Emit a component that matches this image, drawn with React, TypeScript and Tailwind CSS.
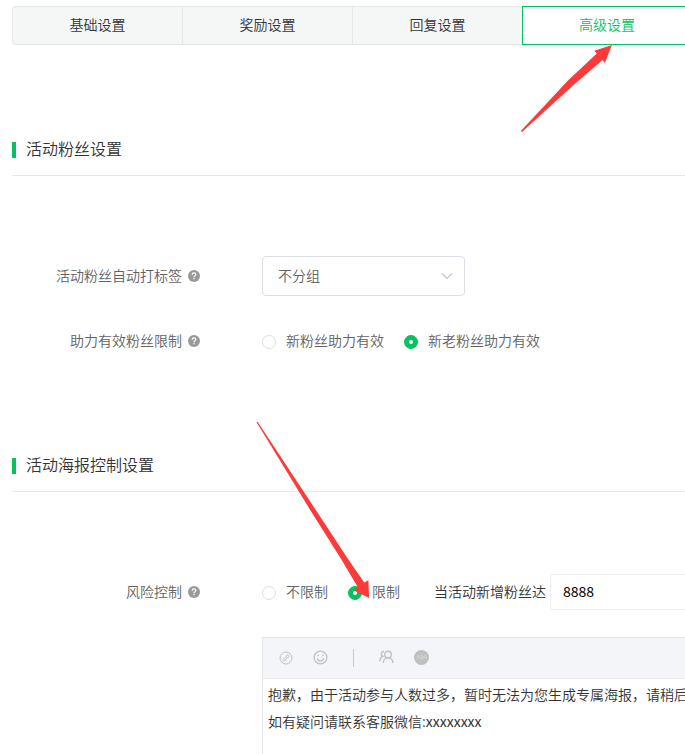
import type { ReactNode } from "react";

const TABS = ["基础设置", "奖励设置", "回复设置"];

function Help() {
  return (
    <svg className="mb-px ml-1.5 block h-3 w-3 shrink-0" viewBox="0 0 12 12">
      <circle cx="6" cy="6" r="6" fill="#999" />
      <path d="M4.2 4.7C4.2 2.4 7.8 2.4 7.8 4.5C7.8 5.7 6 5.7 6 7.2" fill="none" stroke="#fff" strokeWidth="1.2" />
      <rect x="5.4" y="8" width="1.2" height="1.3" fill="#fff" />
    </svg>
  );
}

function Label({ children }: { children: ReactNode }) {
  return (
    <div className="flex w-[188px] shrink-0 items-center justify-end text-[#606266]">
      <span className="pb-0.5">{children}</span>
      <Help />
    </div>
  );
}

function Radio({ checked, children, className = "" }: { checked?: boolean; children: ReactNode; className?: string }) {
  return (
    <div className={`flex shrink-0 items-center whitespace-nowrap text-[#606266] ${className}`}>
      <span
        className={`mt-0.5 mr-2.5 flex h-3.5 w-3.5 items-center justify-center rounded-full border ${
          checked ? "border-[#07c160] bg-[#07c160]" : "border-[#dcdfe6] bg-white"
        }`}
      >
        {checked && <span className="h-1 w-1 rounded-full bg-white" />}
      </span>
      <span className="pb-0.5">{children}</span>
    </div>
  );
}

function SectionTitle({ children }: { children: ReactNode }) {
  return (
    <div className="flex h-[52px] items-center border-b border-[#e7e7e7] text-base text-[#333]">
      <span className="mr-2.5 h-4 w-1 bg-[#07c160]" />
      <span className="pb-[3px]">{children}</span>
    </div>
  );
}

function Toolbar() {
  return (
    <div className="flex h-[41px] items-center border-b border-[#ebebeb] bg-[#f4f5f9] pl-4">
      <svg className="mb-px h-3.5 w-3.5" viewBox="0 0 14 14" fill="none" stroke="#c0c0c0" strokeWidth="1">
        <circle cx="7" cy="7" r="6" />
        <path d="M5.8 7.3C3.6 7.1 3.4 10 5.2 10C6.4 10 7 9.3 7 8.3V5.7C7 4.6 7.7 4 8.8 4C10.6 4 10.4 6.8 8.2 6.7" />
      </svg>
      <svg className="mb-0.5 ml-5 h-[15px] w-[15px]" viewBox="0 0 15 15" fill="none" stroke="#c0c0c0" strokeWidth="1.3">
        <circle cx="7.5" cy="7.5" r="6.4" />
        <path d="M4.2 8.5C5 11.6 10 11.6 10.8 8.5" />
        <path d="M5.2 4.6V6.3M9.8 4.6V6.3" />
      </svg>
      <span className="ml-[25px] h-[18px] w-px bg-[#c8c8c8]" />
      <svg className="mb-0.5 ml-[25px] h-[14px] w-[15px]" viewBox="0 0 15 14" fill="none" stroke="#c0c0c0" strokeWidth="1.4">
        <circle cx="9" cy="4.6" r="3.3" />
        <path d="M4.3 13C4.3 9.9 6.4 7.9 9 7.9C11.8 7.9 13.8 9.9 13.9 13" />
        <path d="M5.1 1.5C2.2 1.2 1.2 5.2 3.9 6.4C1.8 7.1 .8 8.5 .7 11.2" />
      </svg>
      <svg className="mb-0.5 ml-5 h-[15px] w-[15px]" viewBox="0 0 15 15">
        <circle cx="7.5" cy="7.5" r="7.5" fill="#bfbfbf" />
        <path d="M2.7 6.2H5.2M4 5V9M2.7 9L5.3 7.4M6.3 5.3H8.6V9H6.3ZM6.3 7.1H8.6M9.8 5.3H12.2V8.8M9.8 6V9M9.8 7.4H12" fill="none" stroke="#dadada" strokeWidth=".6" />
      </svg>
    </div>
  );
}

export default function App() {
  return (
    <div className="relative h-[754px] w-[685px] overflow-hidden bg-white pt-1.5 pl-3 font-['Noto_Sans_CJK_SC',sans-serif] text-sm leading-5 font-[350] text-[#333]">
      <div className="flex h-[39px] w-[680px]">
        {TABS.map((tab) => (
          <div
            key={tab}
            className="flex w-[170px] shrink-0 items-center justify-center border-y border-l border-[#e4e7e7] bg-[#f5f7f7] pb-[3px] first:rounded-l"
          >
            {tab}
          </div>
        ))}
        <div className="flex w-[170px] shrink-0 items-center justify-center border border-[#07c160] pb-[3px] text-[#07c160]">
          高级设置
        </div>
      </div>

      <section className="mt-[79px]">
        <SectionTitle>活动粉丝设置</SectionTitle>
        <div className="mt-20 flex h-10 items-center">
          <Label>活动粉丝自动打标签</Label>
          <div className="ml-[62px] flex h-10 w-[203px] items-center justify-between rounded border border-[#dcdfe6] pr-[11px] pl-[15px] text-[#606266]">
            <span className="pb-0.5">不分组</span>
            <svg className="h-3 w-3" viewBox="0 0 12 12" fill="none" stroke="#c0c4cc" strokeWidth="1.2">
              <path d="M1 3.3L6 8.3L11 3.3" />
            </svg>
          </div>
        </div>
        <div className="mt-[25px] flex h-10 items-center">
          <Label>助力有效粉丝限制</Label>
          <Radio className="ml-[62px]">新粉丝助力有效</Radio>
          <Radio className="ml-5" checked>新老粉丝助力有效</Radio>
        </div>
      </section>

      <section className="mt-[79px]">
        <SectionTitle>活动海报控制设置</SectionTitle>
        <div className="mt-20 flex h-10 items-center">
          <Label>风险控制</Label>
          <Radio className="ml-[62px]">不限制</Radio>
          <Radio className="ml-5" checked>限制</Radio>
          <span className="ml-[34px] shrink-0 pb-0.5">当活动新增粉丝达</span>
          <div className="ml-1 flex h-9 w-[180px] shrink-0 items-center rounded border border-[#eeeeee] pb-0.5 pl-3 font-normal text-black">8888</div>
        </div>
        <div className="mt-[25px] ml-[250px] h-[180px] w-[500px] border border-[#e5e5e5]">
          <Toolbar />
          <div className="pt-0.5 pl-[5px] leading-[27px] whitespace-nowrap">
            <p>抱歉，由于活动参与人数过多，暂时无法为您生成专属海报，请稍后</p>
            <p>
              如有疑问请联系客服微信:<span className="font-normal">xxxxxxxx</span>
            </p>
          </div>
        </div>
      </section>

      <svg className="pointer-events-none absolute inset-0 h-[754px] w-[685px]" viewBox="0 0 685 754" fill="#fc3a3a">
        <path d="M520.8 131L568 80.5L596.8 53.6L594.3 50.8L612 45L604.8 63L602.6 60L573 85.5L522 132Z" />
        <path d="M256.6 422.2L257.6 421.8L315.8 510L348.7 560L364.2 582.6L368.4 580.3L369.1 598L354.6 590.8L357.4 586.6L341.7 560L310.2 510Z" />
      </svg>
    </div>
  );
}
